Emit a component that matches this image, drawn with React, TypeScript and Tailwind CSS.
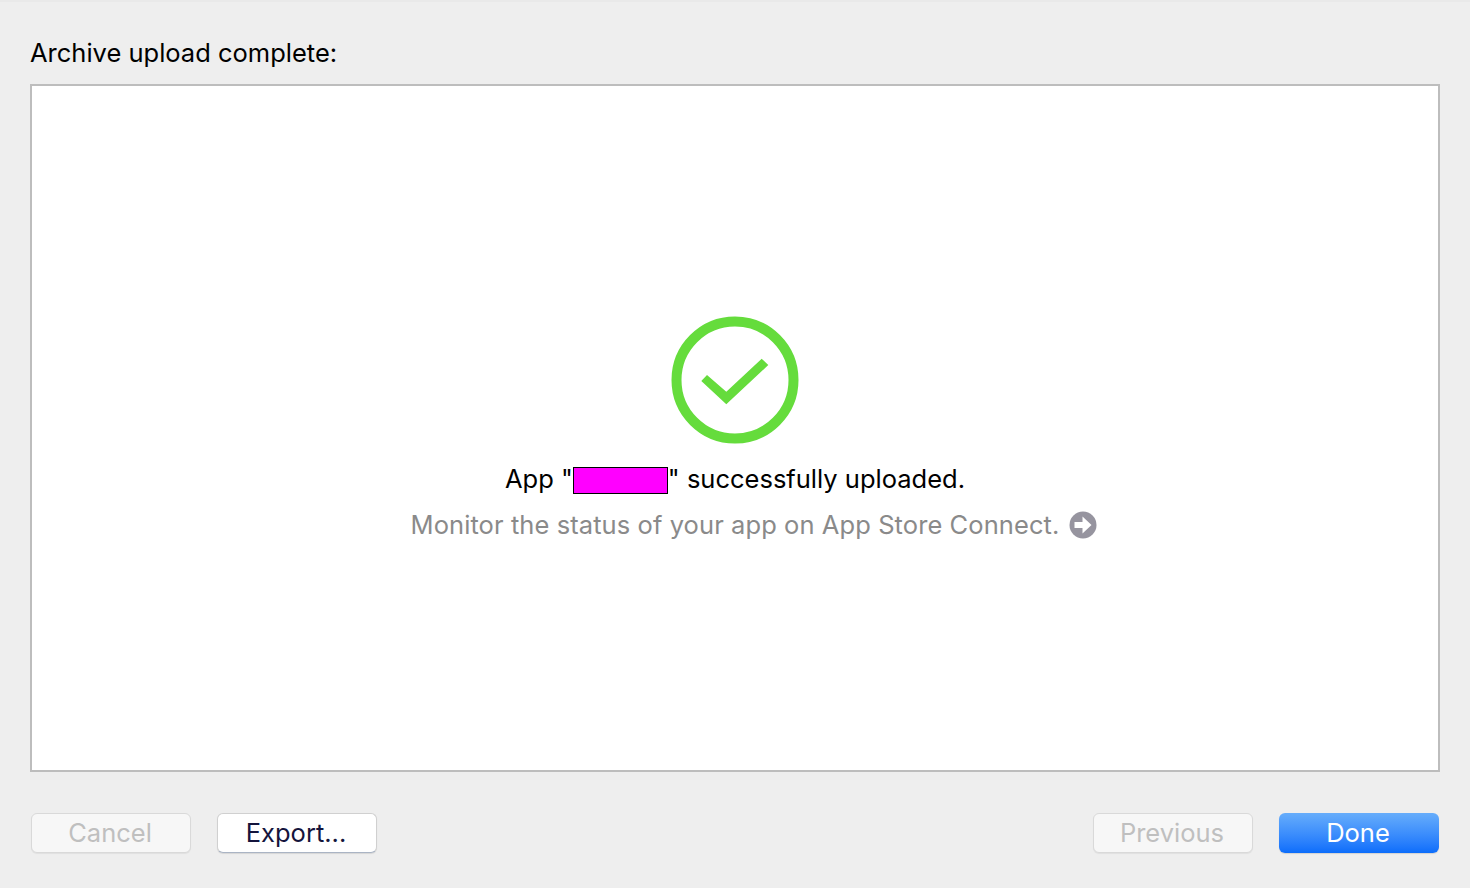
const font = "font-['Inter','Liberation_Sans',sans-serif]";

function FooterButton({ label, kind }: { label: string; kind: "disabled" | "normal" | "primary" }) {
  if (kind === "primary") {
    return (
      <button className="w-40 h-10 pr-[2px] rounded-[6px] text-[25.5px] text-white bg-gradient-to-b from-[#66adfb] to-[#0a6dfb] shadow-[0_1px_1px_rgba(0,0,0,0.12)]">
        {label}
      </button>
    );
  }
  if (kind === "normal") {
    return (
      <button className="w-40 h-10 pb-[2px] pr-[2px] rounded-[6px] text-[25.5px] text-[#14143c] bg-white border border-[#d0d0d0] border-b-[#aab4c4] shadow-[0_1px_1px_rgba(0,0,0,0.1)]">
        {label}
      </button>
    );
  }
  return (
    <button className="w-40 h-10 pb-[2px] pr-[2px] rounded-[6px] text-[25.5px] text-[#bfbfbf] bg-[#f7f7f7] border border-[#d9d9d9] shadow-[0_1px_1px_rgba(0,0,0,0.06)]">
      {label}
    </button>
  );
}

export default function App() {
  return (
    <div className={`${font} w-[1470px] h-[888px] flex flex-col bg-[#eeeeee] border-t-2 border-[#e9e9e9] overflow-hidden`}>
      <div className="h-[82px] pl-[30px] pt-[33px] text-[25.5px] leading-9 text-black">Archive upload complete:</div>
      <div className="mx-[30px] h-[688px] bg-white border-2 border-[#bdbdbd] flex flex-col items-center pt-[230px]">
        <svg width="128" height="128" viewBox="0 0 128 128" className="text-[#65dc3c]">
          <circle cx="64" cy="64" r="58.5" fill="none" stroke="currentColor" strokeWidth="10" />
          <path d="M36 59L30.3 65L55.3 88.3L97.3 49L90.7 42.7L55.3 75.7Z" fill="currentColor" />
        </svg>
        <div className="mt-[17px] h-9 flex items-center text-[25.5px] text-black">
          <span>App "</span>
          <span className="w-[95px] h-[27px] mt-[3px] bg-[#ff00ff] border border-black" />
          <span>" successfully uploaded.</span>
        </div>
        <div className="mt-[10px] h-9 flex items-center text-[25.5px] tracking-[0.08px] text-[#8a8a8a] relative">
          <span>Monitor the status of your app on App Store Connect.</span>
          <svg width="28" height="28" viewBox="0 0 28 28" className="absolute left-full ml-[10px] top-[4px]">
            <circle cx="14" cy="14" r="13.5" fill="#96949f" />
            <path d="M5.5 11H13.5V5.5L22.5 14L13.5 22.5V17H5.5Z" fill="#fff" />
          </svg>
        </div>
      </div>
      <div className="flex justify-between px-[31px] pt-[41px]">
        <div className="flex gap-[26px]">
          <FooterButton label="Cancel" kind="disabled" />
          <FooterButton label="Export..." kind="normal" />
        </div>
        <div className="flex gap-[26px]">
          <FooterButton label="Previous" kind="disabled" />
          <FooterButton label="Done" kind="primary" />
        </div>
      </div>
    </div>
  );
}
